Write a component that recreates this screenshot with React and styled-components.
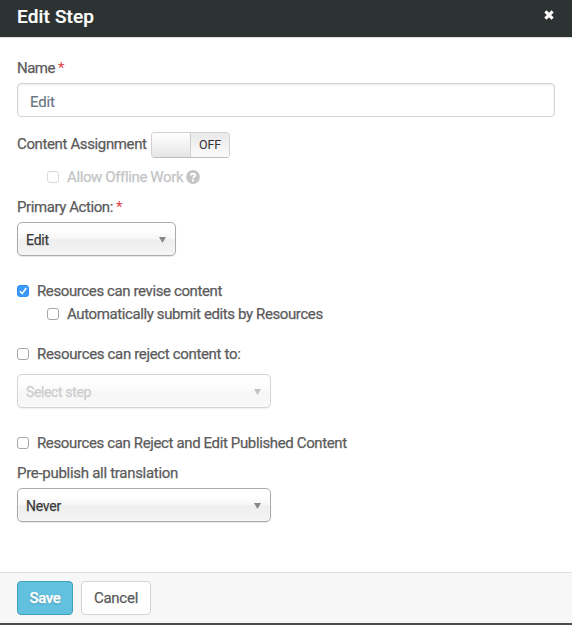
import React from "react";
import styled, { createGlobalStyle } from "styled-components";

const GlobalStyle = createGlobalStyle`
  * { box-sizing: border-box; }
  body {
    margin: 0;
    background: #fff;
    font-family: Roboto, "Liberation Sans", sans-serif;
    font-size: 15px;
    color: #5b5b5b;
  }
`;

const Dialog = styled.div`
  height: 625px;
  display: flex;
  flex-direction: column;
  background: #fff;
  border-bottom: 2px solid #4a4a4c;
  overflow: hidden;
`;

const Header = styled.header`
  height: 38px;
  flex: none;
  display: flex;
  align-items: center;
  justify-content: space-between;
  padding: 0 18px 4px 17px;
  background: #2d3332;
  border-bottom: 1px solid #dcdedd;
`;

const Title = styled.h1`
  margin: 0;
  font-size: 19px;
  font-weight: 500;
  line-height: 24px;
  letter-spacing: 0.15px;
  -webkit-text-stroke: 0.2px;
  color: #fff;
`;

const CloseButton = styled.button`
  display: flex;
  padding: 0;
  margin-top: -4px;
  border: 0;
  background: none;
`;

const Form = styled.main`
  flex: 1;
  padding: 15px 17px 0;
`;

const Text = styled.span`
  letter-spacing: ${(p) => p.$tracking ?? -0.37}px;
  -webkit-text-stroke: 0.25px;
  white-space: nowrap;
`;

const Label = styled.label`
  display: flex;
  align-items: center;
  gap: 3px;
  height: 30px;
  margin-top: ${(p) => p.$top || 0}px;
`;

const Required = styled.span`
  color: #e0444b;
`;

const NameInput = styled.input`
  display: block;
  width: 100%;
  height: 34px;
  padding: 3px 12px 0;
  border: 1px solid #d3d3d3;
  border-radius: 4px;
  box-shadow: inset 0 1px 2px rgba(0, 0, 0, 0.08);
  font: inherit;
  letter-spacing: -0.15px;
  -webkit-text-stroke: 0.2px;
  color: #6b7684;
  outline: 0;
`;

const AssignmentRow = styled.div`
  display: flex;
  align-items: center;
  gap: 4px;
  height: 26px;
  margin-top: 15px;
`;

const AssignmentLabel = styled.span`
  width: 130px;
  padding-bottom: 2px;
`;

const Toggle = styled.div`
  display: flex;
  width: 79px;
  height: 26px;
  border: 1px solid #d2d2d2;
  border-bottom-color: #bcbcbc;
  border-radius: 4px;
  overflow: hidden;
`;

const ToggleKnob = styled.span`
  width: 39px;
  border-right: 1px solid #cfcfcf;
  background: linear-gradient(#fff, #e5e5e5);
`;

const ToggleState = styled.span`
  flex: 1;
  display: flex;
  align-items: center;
  justify-content: center;
  padding-bottom: 1px;
  background: linear-gradient(#e9e9e9, #fafafa);
  font-size: 12.5px;
  letter-spacing: -0.1px;
  color: #333;
`;

const CheckRow = styled.label`
  display: flex;
  align-items: center;
  height: 20px;
  margin-top: ${(p) => p.$top}px;
  padding-left: ${(p) => (p.$nested ? 30 : 0)}px;
  color: ${(p) => (p.$disabled ? "#c3c5c6" : "inherit")};
`;

const Box = styled.span`
  display: flex;
  width: 12px;
  height: 12px;
  margin-right: 8px;
  border: 1px solid ${(p) => (p.$checked ? "#3390f7" : p.$disabled ? "#dadada" : "#a8a8a8")};
  border-radius: 3px;
  background: ${(p) => (p.$checked ? "#3b99fc" : "#fff")};
`;

const HelpIcon = styled.svg`
  margin-left: 3px;
`;

const SelectBox = styled.div`
  display: flex;
  align-items: center;
  justify-content: space-between;
  width: ${(p) => p.$width}px;
  height: 34px;
  margin-top: ${(p) => p.$top || 0}px;
  padding: 2px 9px 0 8px;
  border: 1px solid #aaa;
  border-radius: 5px;
  background: linear-gradient(#fff 20%, #f6f6f6 50%, #eee 52%, #f4f4f4 100%);
  box-shadow: 0 1px 1px rgba(0, 0, 0, 0.1), inset 0 0 2px #fff;
  font-size: 14px;
  color: #3b3b3b;
  opacity: ${(p) => (p.$disabled ? 0.5 : 1)};
`;

const SelectText = styled(Text)`
  color: ${(p) => (p.$placeholder ? "#999" : "inherit")};
`;

const Arrow = styled.svg`
  margin-bottom: 1px;
`;

const Footer = styled.footer`
  flex: none;
  display: flex;
  gap: 8px;
  height: 51px;
  padding: 8px 17px;
  border-top: 1px solid #e0e0e0;
  background: #f7f7f7;
`;

const Button = styled.button`
  width: ${(p) => p.$width}px;
  height: 34px;
  padding: 0;
  border: 1px solid ${(p) => (p.$primary ? "#409fbc" : "#d5d5d5")};
  border-radius: 4px;
  background: ${(p) => (p.$primary ? "#62c1de" : "#fff")};
  color: ${(p) => (p.$primary ? "#fff" : "#5b5b5b")};
  font: inherit;
  font-weight: ${(p) => (p.$primary ? 500 : 400)};
  text-shadow: ${(p) => (p.$primary ? "0 1px 2px rgba(0,0,0,.25)" : "none")};
`;

function Checkbox({ label, tracking, top, nested, checked, disabled, children }) {
  return (
    <CheckRow $top={top} $nested={nested} $disabled={disabled}>
      <Box $checked={checked} $disabled={disabled}>
        {checked && (
          <svg width="10" height="10" viewBox="0 0 10 10" fill="none" stroke="#fff" strokeWidth="1.6">
            <path d="M2 5.3 4.2 7.6 8.2 2" />
          </svg>
        )}
      </Box>
      <Text $tracking={tracking}>{label}</Text>
      {children}
    </CheckRow>
  );
}

function Select({ value, tracking, width, top, disabled }) {
  return (
    <SelectBox $width={width} $top={top} $disabled={disabled}>
      <SelectText $tracking={tracking} $placeholder={disabled}>{value}</SelectText>
      <Arrow width="7" height="6" viewBox="0 0 7 6">
        <path d="M0 0h7L3.5 6z" fill="#888" />
      </Arrow>
    </SelectBox>
  );
}

export default function App() {
  return (
    <>
      <GlobalStyle />
      <Dialog>
        <Header>
          <Title>Edit Step</Title>
          <CloseButton aria-label="Close">
            <svg width="10" height="10" viewBox="0 0 10 10" stroke="#fff" strokeWidth="3.2">
              <path d="M1.4 1.4 8.6 8.6M8.6 1.4 1.4 8.6" />
            </svg>
          </CloseButton>
        </Header>
        <Form>
          <Label>
            <Text $tracking={-0.5}>Name</Text>
            <Required>*</Required>
          </Label>
          <NameInput defaultValue="Edit" />
          <AssignmentRow>
            <AssignmentLabel><Text>Content Assignment</Text></AssignmentLabel>
            <Toggle>
              <ToggleKnob />
              <ToggleState>OFF</ToggleState>
            </Toggle>
          </AssignmentRow>
          <Checkbox top={9} nested disabled tracking={-0.38} label="Allow Offline Work">
            <HelpIcon width="14" height="14" viewBox="0 0 14 14">
              <circle cx="7" cy="7" r="6.9" fill="#c3c5c6" />
              <path d="M4.7 5.3C4.9 3.2 9.3 3.1 9.2 5.4 9.1 6.8 7.2 6.8 7.1 8.4" fill="none" stroke="#fff" strokeWidth="1.9" />
              <path d="M6 9.6h2v1.9H6z" fill="#fff" />
            </HelpIcon>
          </Checkbox>
          <Label $top={5}>
            <Text $tracking={-0.42}>Primary Action:</Text>
            <Required>*</Required>
          </Label>
          <Select value="Edit" tracking={-0.2} width={159} />
          <Checkbox top={25} checked tracking={-0.39} label="Resources can revise content" />
          <Checkbox top={3} nested tracking={-0.39} label="Automatically submit edits by Resources" />
          <Checkbox top={20} tracking={-0.34} label="Resources can reject content to:" />
          <Select top={10} value="Select step" width={254} disabled />
          <Checkbox top={25} label="Resources can Reject and Edit Published Content" />
          <Label $top={5}>
            <Text $tracking={-0.29}>Pre-publish all translation</Text>
          </Label>
          <Select value="Never" tracking={-0.25} width={254} />
        </Form>
        <Footer>
          <Button $primary $width={56}><Text>Save</Text></Button>
          <Button $width={70}><Text $tracking={-0.25}>Cancel</Text></Button>
        </Footer>
      </Dialog>
    </>
  );
}
